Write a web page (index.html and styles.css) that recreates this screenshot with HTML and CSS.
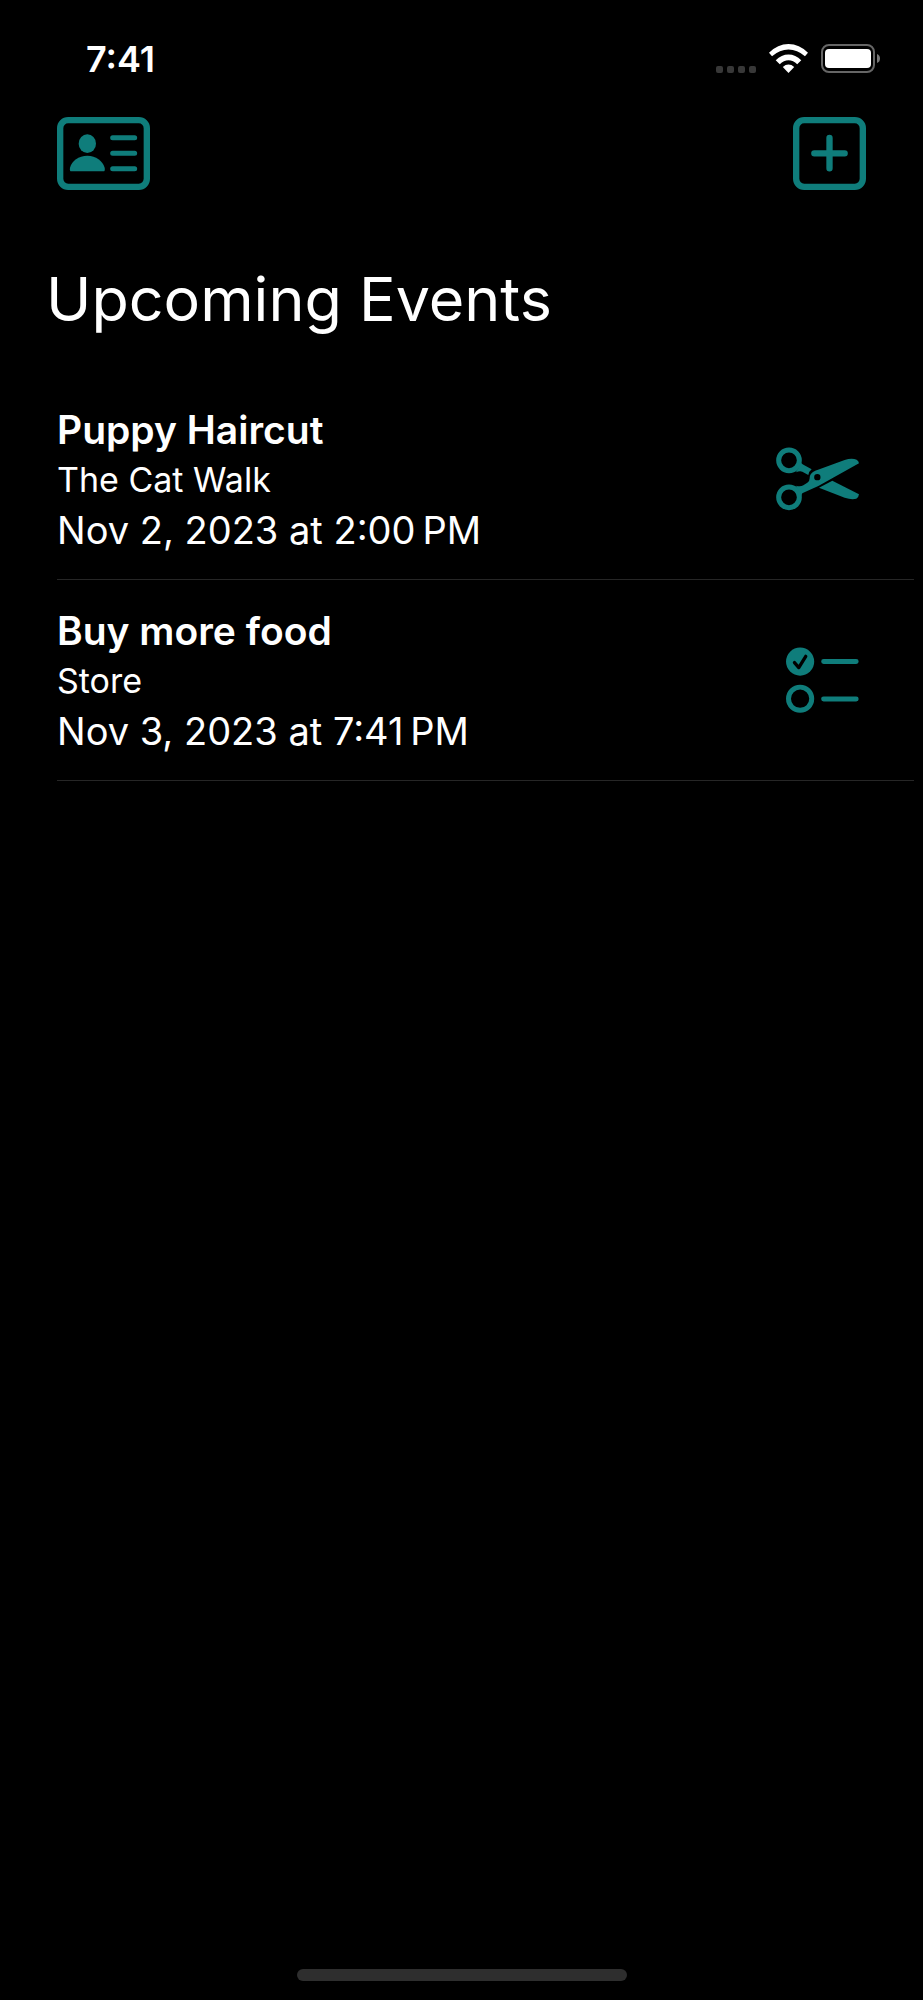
FILE: index.html
```
<!DOCTYPE html>
<html lang="en">

<head>
    <meta charset="UTF-8">
    <meta name="viewport" content="width=device-width, initial-scale=1">
    <title>Upcoming Events</title>
    <link rel="stylesheet" href="styles.css">
</head>

<body>
    <div class="status-bar">
        <span class="time">7:41</span>
        <div class="status-icons">
            <svg class="signal" viewBox="0 0 40 7" width="40" height="7">
                <rect width="7" height="7" rx="2" />
                <rect x="11" width="7" height="7" rx="2" />
                <rect x="22" width="7" height="7" rx="2" />
                <rect x="33" width="7" height="7" rx="2" />
            </svg>
            <svg class="wifi" viewBox="208 71 116 86" width="39" height="29">
                <path d="M208 97Q234 71 266 71T324 97L315 107Q292 87 266 87T217 107Z" />
                <path d="M228 119Q245 102 266 102T304 119L292 131Q280 119 266 119T240 131Z" />
                <path d="M249 139Q257 132 266 132T283 139L266 157Z" />
            </svg>
            <svg class="battery" viewBox="0 0 60 29" width="60" height="29">
                <rect class="case" x="1" y="1" width="52" height="27" rx="7" />
                <rect class="level" x="4" y="5" width="46" height="19" rx="4" />
                <path class="nub" d="M56 10Q59 11 59 14.500T56 19Z" />
            </svg>
        </div>
    </div>

    <header class="toolbar">
        <button class="icon-btn" aria-label="Profile">
            <svg viewBox="51 291 279 219" width="93" height="73">
                <rect class="line thick" x="60.500" y="300.500" width="260" height="200" rx="24" />
                <ellipse cx="142" cy="371" rx="26" ry="28" />
                <path d="M94 454Q88 454 90 443C95 422 116 407 142 407S188 422 194 443Q196 454 190 454Z" />
                <path class="line" d="M218 353H284M218 400H284M218 446H284" />
            </svg>
        </button>
        <button class="icon-btn" aria-label="Add event">
            <svg viewBox="279 291 219 219" width="73" height="73">
                <rect class="line thick" x="288.500" y="300.500" width="200" height="200" rx="24" />
                <path class="line thick" d="M343 400H434M388.500 354V445" />
            </svg>
        </button>
    </header>

    <main>
        <h1>Upcoming Events</h1>
        <ul class="events">
            <li class="event">
                <div class="details">
                    <h2>Puppy Haircut</h2>
                    <p class="place">The Cat Walk</p>
                    <p class="date">Nov 2, 2023 at 2:00&#8239;PM</p>
                </div>
                <svg class="type" viewBox="105 78 249 192" width="83" height="64">
                    <circle class="ring" cx="144" cy="118" r="31" />
                    <circle class="ring" cx="144" cy="229" r="31" />
                    <path d="M181 126Q184 130 190 133L212 145Q203 152 202 162L184 152Q176 149 165 154Z" />
                    <path fill-rule="evenodd" d="M165 194Q178 198 187 193L199 185Q206 181 206 172C206 158 216 151 229 147L311 117Q332 110 347 116Q353 120 354 127L232 195L187 215Q180 218 182 226ZM229 159a9.500 9.500 0 1 0 0 19a9.500 9.500 0 1 0 0-19Z" />
                    <path d="M234 200L274 179L354 220Q353 229 346 233Q332 237 311 230Z" />
                </svg>
            </li>
            <li class="event">
                <div class="details">
                    <h2>Buy more food</h2>
                    <p class="place">Store</p>
                    <p class="date">Nov 3, 2023 at 7:41&#8239;PM</p>
                </div>
                <svg class="type" viewBox="138 81 219 199" width="73" height="66">
                    <circle cx="180" cy="125" r="42.500" />
                    <path class="check" d="M163 128L176 143L197 109" />
                    <circle class="ring" cx="180" cy="237" r="35" />
                    <path class="line" d="M251 125H349M251 238H349" />
                </svg>
            </li>
        </ul>
    </main>

    <div class="home-indicator"></div>
</body>

</html>
```

FILE: styles.css
```
* {
    box-sizing: border-box;
}

body {
    margin: 0;
    min-height: 100vh;
    display: flex;
    flex-direction: column;
    background: #000;
    color: #fff;
    font-family: 'Inter', sans-serif;
}

h1,
h2,
p,
ul {
    margin: 0;
    padding: 0;
}

.status-bar {
    display: flex;
    justify-content: space-between;
    align-items: center;
    padding: 37px 42px 0 86px;
}

.time {
    font-size: 36px;
    line-height: 44px;
    font-weight: 600;
}

.status-icons {
    display: flex;
    align-items: flex-end;
    gap: 13px;
    padding-bottom: 2px;
}

.signal {
    fill: #383838;
}

.wifi,
.level {
    fill: #fff;
}

.case {
    fill: none;
    stroke: #666;
    stroke-width: 2;
}

.nub {
    fill: #777;
}

.toolbar {
    display: flex;
    justify-content: space-between;
    padding: 36px 57px 0;
}

.icon-btn {
    display: block;
    padding: 0;
    border: none;
    background: transparent;
    cursor: pointer;
}

.icon-btn svg {
    display: block;
}

.icon-btn svg,
.type {
    fill: #0f7d7b;
}

.line,
.ring {
    fill: none;
    stroke: #0f7d7b;
    stroke-width: 15;
    stroke-linecap: round;
}

.thick {
    stroke-width: 19;
}

.check {
    fill: none;
    stroke: #000;
    stroke-width: 10;
    stroke-linecap: round;
    stroke-linejoin: round;
}

h1 {
    padding: 69px 46px 0;
    font-size: 61px;
    line-height: 80px;
    font-weight: 400;
}

.events {
    list-style: none;
    padding: 40px 9px 0 57px;
}

.event {
    display: flex;
    justify-content: space-between;
    align-items: center;
    height: 201px;
    padding-right: 55px;
    border-bottom: 1px solid #262626;
}

.details {
    padding-top: 2px;
    line-height: 50px;
}

h2 {
    font-size: 39px;
    font-weight: 600;
}

.place {
    font-size: 34px;
}

.date {
    font-size: 38px;
}

.home-indicator {
    width: 330px;
    max-width: 60%;
    height: 12px;
    margin: auto auto 19px;
    border-radius: 6px;
    background: #2e2e2e;
}
```
